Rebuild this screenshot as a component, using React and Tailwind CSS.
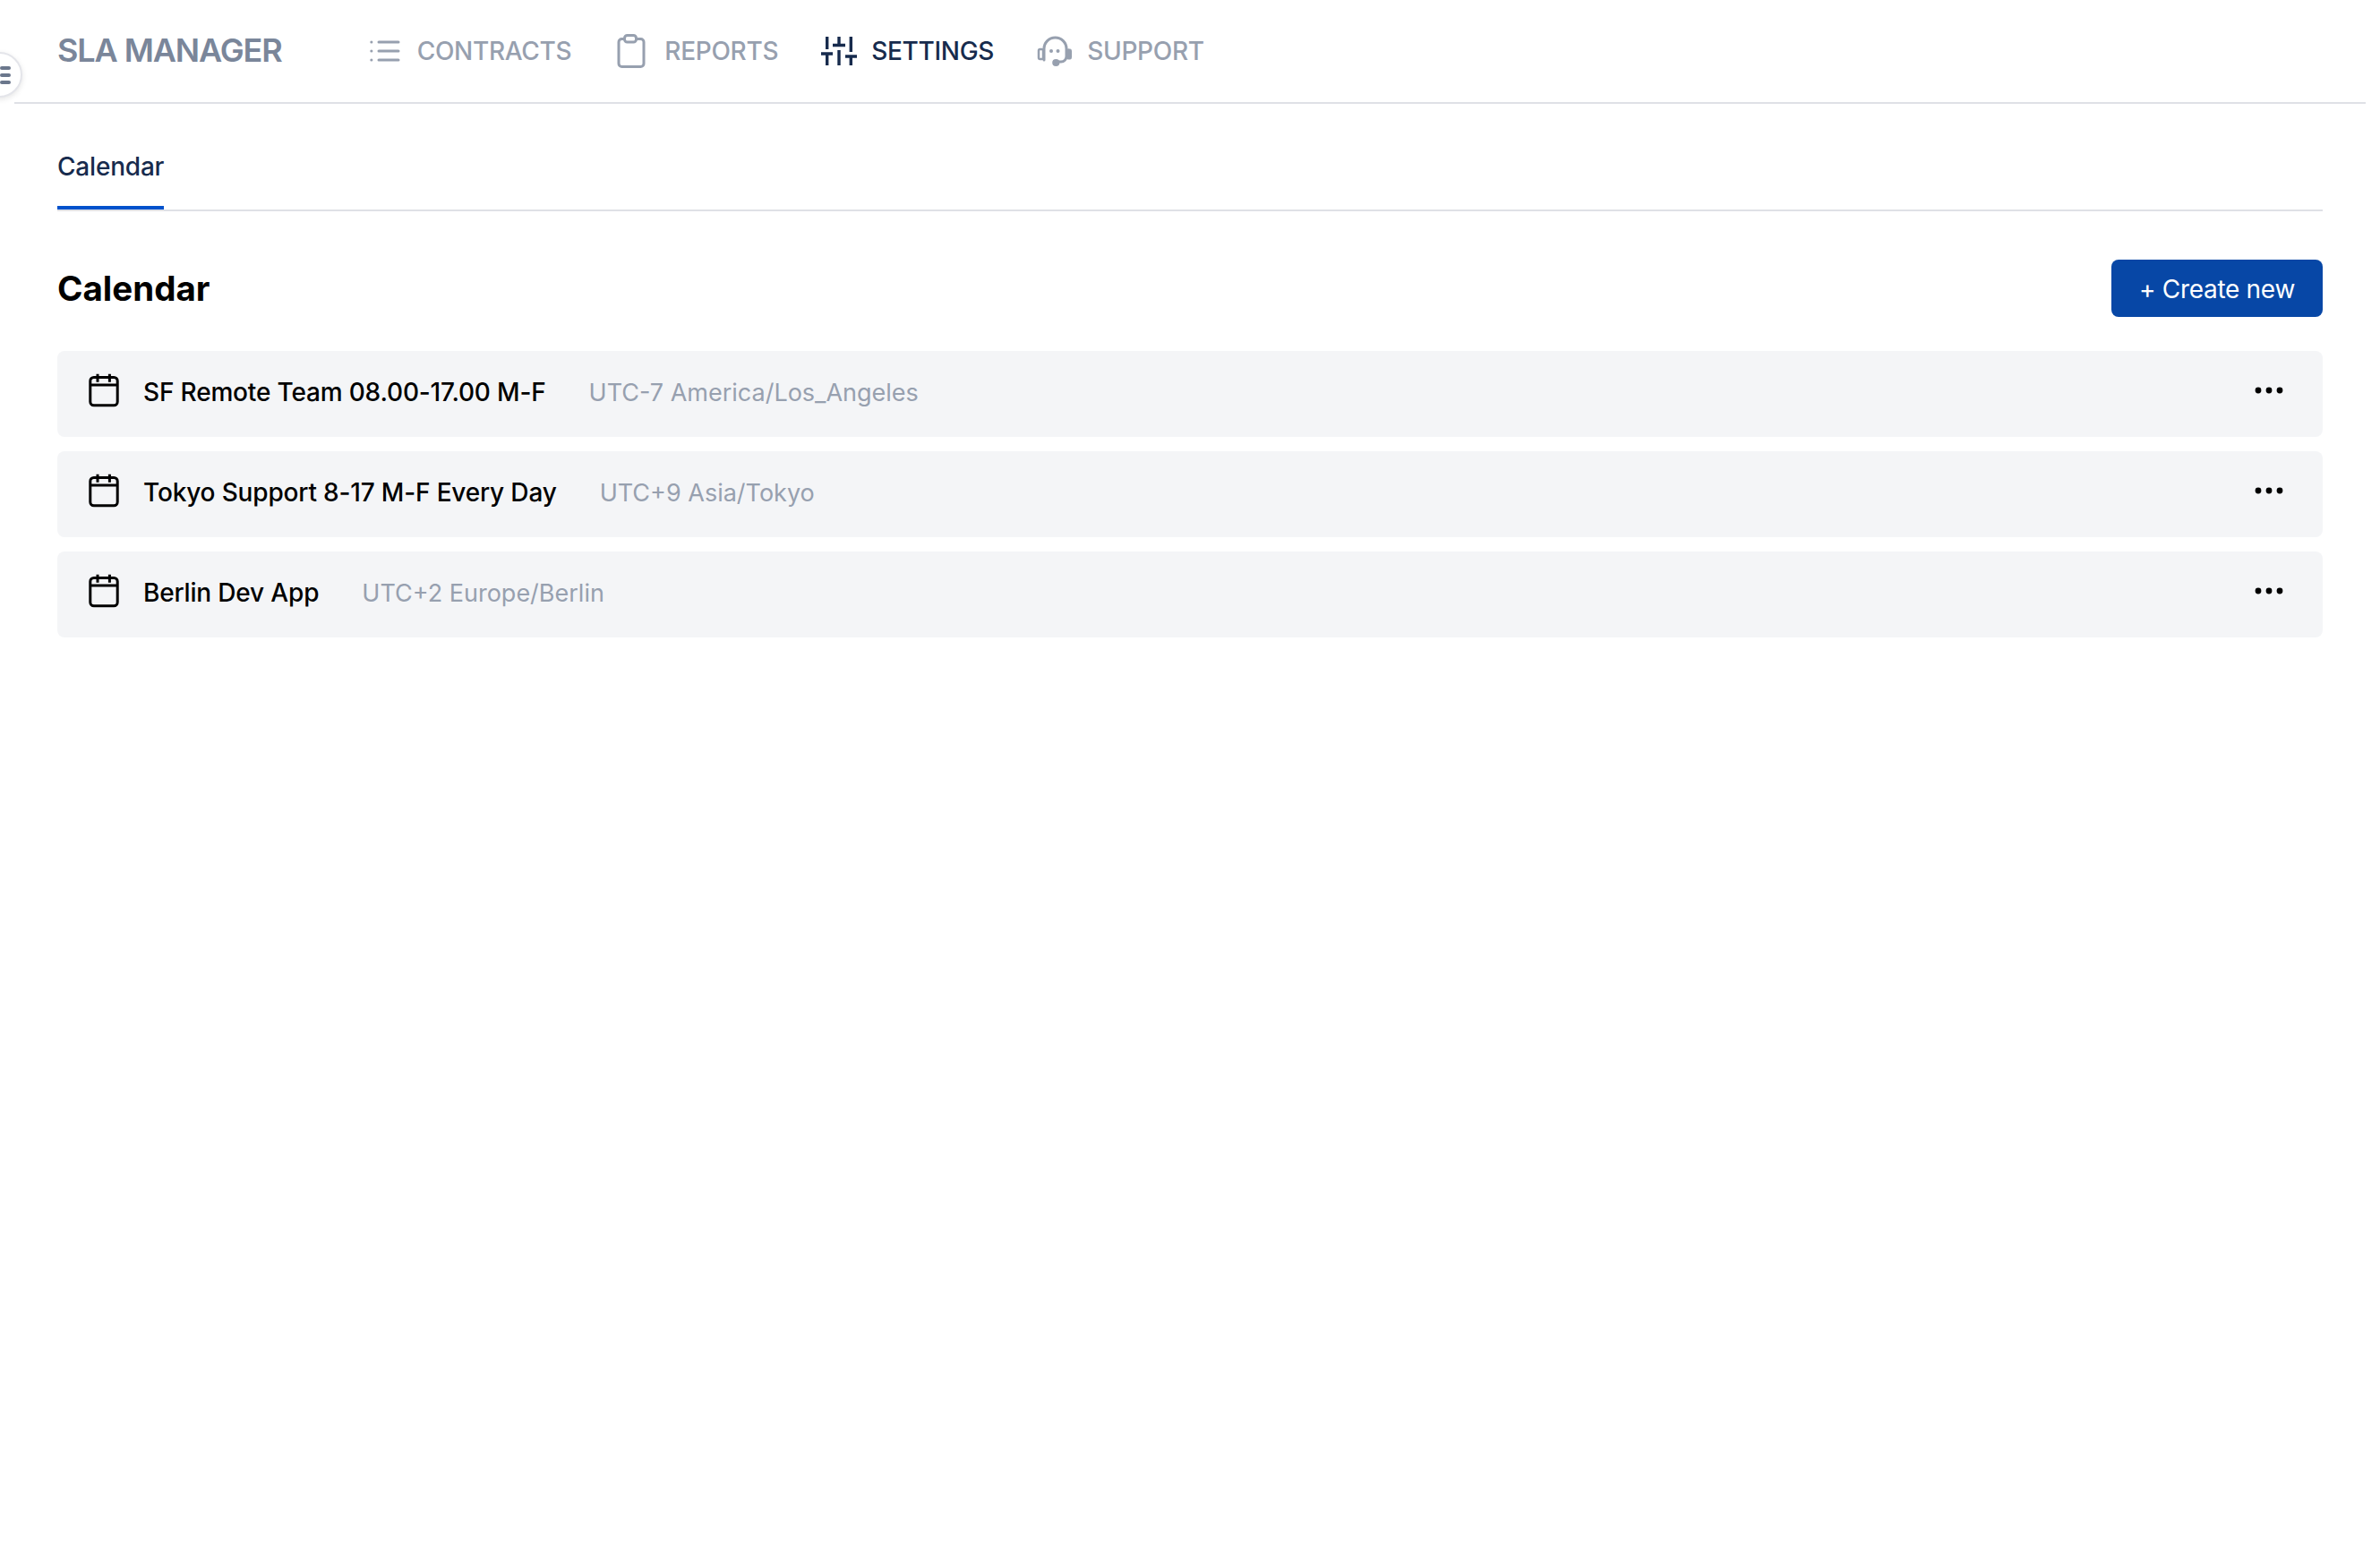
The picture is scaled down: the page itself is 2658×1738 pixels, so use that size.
const NAV_ICON = "h-10 w-10 shrink-0 fill-none stroke-current";

function ListIcon() {
  return (
    <svg viewBox="0 0 40 40" className={NAV_ICON} strokeWidth="3" strokeLinecap="round">
      <path d="M13 10h22M13 20h22M13 30h22" />
      <path d="M4.8 10h.1M4.8 20h.1M4.8 30h.1" />
    </svg>
  );
}

function ClipboardIcon() {
  return (
    <svg viewBox="3 0 40 40" className={NAV_ICON} strokeWidth="3">
      <path d="M14 6.5h-2.5a3.5 3.5 0 0 0-3.5 3.5v24a3.5 3.5 0 0 0 3.5 3.5h21a3.5 3.5 0 0 0 3.5-3.5V10a3.5 3.5 0 0 0-3.5-3.5H28" />
      <rect x="14.5" y="2.5" width="13" height="7.5" rx="3" />
    </svg>
  );
}

function SlidersIcon() {
  return (
    <svg viewBox="0 0 40 40" className={NAV_ICON} strokeWidth="3.4">
      <path d="M6.7 4v14M6.7 23v13M0 23h13" />
      <path d="M20 4v10M20 19v17M13 13.5h14" />
      <path d="M33.3 4v17M33.3 26v10M27 26h13" />
    </svg>
  );
}

function HeadsetIcon() {
  return (
    <svg viewBox="1.5 0 40 40" className={NAV_ICON} strokeWidth="3" strokeLinecap="round">
      <path d="M9.5 30V17.5a12.5 12.5 0 0 1 25 0V26a6 6 0 0 1-6 6H23" />
      <rect x="3.5" y="18" width="5" height="11" rx="1.5" strokeWidth="2.5" />
      <rect x="35" y="18" width="5" height="11" rx="1.5" className="fill-current" strokeWidth="1" />
      <circle cx="22.8" cy="33" r="2.6" className="fill-current" />
      <circle cx="17.5" cy="20" r="2" className="fill-current" stroke="none" />
      <circle cx="25" cy="20" r="2" className="fill-current" stroke="none" />
    </svg>
  );
}

function CalendarIcon() {
  return (
    <svg viewBox="0 0 40 48" className="h-12 w-10 shrink-0 fill-none stroke-black" strokeWidth="3">
      <rect x="4.8" y="5.5" width="30.4" height="31.3" rx="4" />
      <path d="M4.8 14h30.4M13 1.7v9M26.4 1.7v9" />
    </svg>
  );
}

function DotsIcon() {
  return (
    <svg viewBox="0 0 40 48" className="h-12 w-10 shrink-0 fill-black">
      <circle cx="8" cy="20" r="3.4" />
      <circle cx="20" cy="20" r="3.4" />
      <circle cx="32" cy="20" r="3.4" />
    </svg>
  );
}

const navItems = [
  { label: "CONTRACTS", icon: <ListIcon /> },
  { label: "REPORTS", icon: <ClipboardIcon /> },
  { label: "SETTINGS", icon: <SlidersIcon />, active: true },
  { label: "SUPPORT", icon: <HeadsetIcon /> },
];

const calendars = [
  { name: "SF Remote Team 08.00-17.00 M-F", zone: "UTC-7 America/Los_Angeles" },
  { name: "Tokyo Support 8-17 M-F Every Day", zone: "UTC+9 Asia/Tokyo" },
  { name: "Berlin Dev App", zone: "UTC+2 Europe/Berlin" },
];

export default function App() {
  return (
    <div className="relative min-h-screen overflow-hidden bg-white font-['Inter',sans-serif]">
      {/* Sidebar toggle */}
      <button className="absolute left-[-26px] top-[58px] z-10 flex h-[51px] w-[51px] items-center justify-end rounded-full border-2 border-[#e4e5ea] bg-white pr-[11px] shadow-[0_2px_6px_rgba(0,0,0,0.1)]">
        <span className="flex w-[12px] flex-col gap-[4px]">
          <span className="h-[4px] rounded-full bg-[#6b778c]" />
          <span className="h-[4px] rounded-full bg-[#6b778c]" />
          <span className="h-[4px] rounded-full bg-[#6b778c]" />
        </span>
      </button>

      {/* Top nav */}
      <header className="mx-4 flex h-[116px] items-center border-b-2 border-[#dfe1e6] px-12">
        <span className="-mt-[2px] text-[36px] font-semibold tracking-[-1.1px] text-[#7a869a]">SLA MANAGER</span>
        <nav className="ml-[95px] flex items-center gap-12">
          {navItems.map((item) => (
            <a
              key={item.label}
              className={`flex items-center gap-4 text-[28px] font-medium tracking-[-0.3px] ${
                item.active ? "text-[#172b4d]" : "text-[#97a0af]"
              }`}
            >
              {item.icon}
              {item.label}
            </a>
          ))}
        </nav>
      </header>

      <main className="px-16">
        {/* Tabs */}
        <div className="flex h-[120px] border-b-2 border-[#dfe1e6]">
          <span className="flex items-center border-b-4 border-[#0052cc] pt-[26px] text-[28px] font-medium tracking-[-0.2px] text-[#172b4d]">
            Calendar
          </span>
        </div>

        <div className="mt-[54px] flex items-center justify-between">
          <h1 className="pt-[2px] text-[38.5px] font-bold text-black">Calendar</h1>
          <button className="h-16 w-[236px] rounded-lg bg-[#0747a6] pt-px text-[28px] tracking-[-0.3px] text-white">
            + Create new
          </button>
        </div>

        {/* Calendar list */}
        <ul className="mt-[38px] flex flex-col gap-4">
          {calendars.map((cal) => (
            <li key={cal.name} className="flex h-24 items-center rounded-lg bg-[#f4f5f7] pl-8 pr-10">
              <CalendarIcon />
              <span className="mb-[4px] ml-6 text-[28px] font-medium tracking-[-0.17px] text-black">{cal.name}</span>
              <span className="mb-[2px] ml-12 text-[27px] text-[#97a0af]">{cal.zone}</span>
              <span className="ml-auto">
                <DotsIcon />
              </span>
            </li>
          ))}
        </ul>
      </main>
    </div>
  );
}
